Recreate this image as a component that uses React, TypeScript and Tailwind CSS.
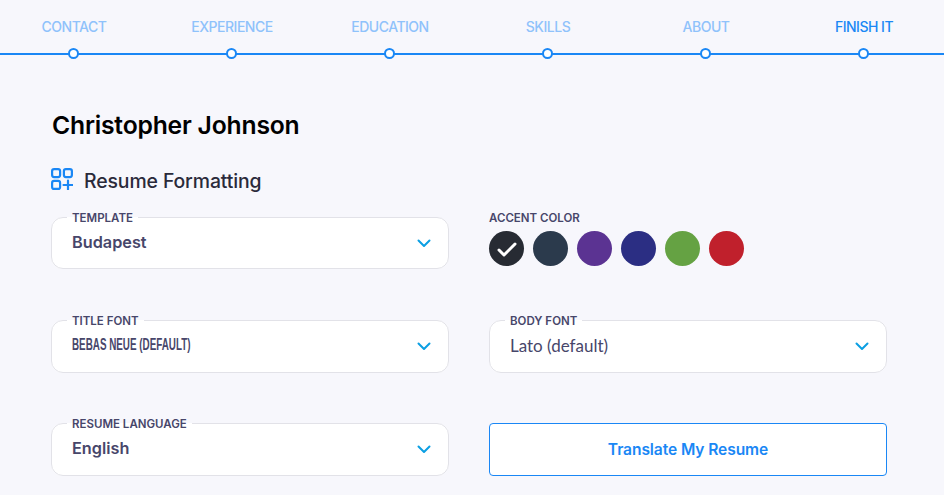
const steps = ["CONTACT", "EXPERIENCE", "EDUCATION", "SKILLS", "ABOUT", "FINISH IT"];
const colors = ["bg-[#272b33]", "bg-[#2b3a4c]", "bg-[#5b3392]", "bg-[#2b2e83]", "bg-[#65a243]", "bg-[#c0202c]"];

function Chevron() {
  return (
    <svg width="14" height="9" viewBox="0 0 14 9" fill="none" className="shrink-0">
      <path d="M1.5 1.5L7 7l5.5-5.5" stroke="#0b9fe3" strokeWidth="2" strokeLinecap="round" strokeLinejoin="round" />
    </svg>
  );
}

function Field({ label, children, height }: { label: string; children: React.ReactNode; height: string }) {
  return (
    <fieldset className={`${height} rounded-xl border border-[#e2e2e8] bg-white pl-[20px] pr-[17px]`}>
      <legend className="ml-[-5px] px-[5px] text-[11.5px] leading-[12px] font-semibold text-[#47466a]">
        <span className="relative top-[1px]">{label}</span>
      </legend>
      <div className="flex h-[40px] items-center justify-between">
        {children}
        <Chevron />
      </div>
    </fieldset>
  );
}

export default function App() {
  return (
    <div className="h-[495px] w-[944px] overflow-hidden bg-[#f7f7fc] font-['Inter',sans-serif]">
      <div className="h-[55px] border-b-2 border-[#1a87f5]">
        <div className="ml-[-6px] grid w-[948px] grid-cols-6">
          {steps.map((s, i) => (
            <div key={s} className="flex h-[60px] flex-col items-center pt-[19px]">
              <span className={`pl-[2px] text-[14px] leading-[16px] font-medium tracking-[-0.5px] ${i === 5 ? "text-[#1a87f5]" : "text-[#8fc2fb]"}`}>{s}</span>
              <span className="mt-[13px] h-[11px] w-[11px] rounded-full border-2 border-[#1a87f5] bg-white" />
            </div>
          ))}
        </div>
      </div>

      <div className="pl-[51px] pr-[57px]">
        <h1 className="mt-[55px] ml-[1px] text-[24.7px] leading-[30px] font-semibold tracking-[-0.2px] text-black">Christopher Johnson</h1>
        <div className="mt-[27px] flex h-[24px] items-center gap-[11px]">
          <svg width="22" height="22" viewBox="0 0 22 22" fill="none" stroke="#1a87f5" strokeWidth="2.2">
            <rect x="1.1" y="1.1" width="8" height="8" rx="2" />
            <rect x="12.9" y="1.1" width="8" height="8" rx="2" />
            <rect x="1.1" y="12.9" width="8" height="8" rx="2" />
            <path d="M17 12.5v9M12.5 17h9" strokeLinecap="round" />
          </svg>
          <h2 className="pt-[3px] text-[19.4px] leading-[24px] font-medium tracking-[-0.1px] text-[#2a2a3a]">Resume Formatting</h2>
        </div>

        <div className="mt-[20px] grid grid-cols-2 gap-x-[40px] gap-y-[44px]">
          <Field label="TEMPLATE" height="h-[58px] mb-[1px]">
            <span className="pb-[2px] text-[16.25px] font-semibold text-[#47466a]">Budapest</span>
          </Field>
          <div>
            <div className="pt-[1px] text-[11.5px] leading-[12px] font-semibold text-[#47466a]">ACCENT COLOR</div>
            <div className="mt-[7px] flex gap-[9px]">
              {colors.map((c, i) => (
                <div key={c} className={`flex h-[35px] w-[35px] items-center justify-center rounded-full ${c}`}>
                  {i === 0 && (
                    <svg width="20" height="16" viewBox="0 0 20 16" fill="none">
                      <path d="M2 9l5 5L18 3" stroke="white" strokeWidth="3" strokeLinecap="round" strokeLinejoin="round" />
                    </svg>
                  )}
                </div>
              ))}
            </div>
          </div>

          <Field label="TITLE FONT" height="h-[59px]">
            <span className="inline-block w-[118px] origin-left scale-x-[0.615] whitespace-nowrap pb-[2px] font-['Liberation_Sans',sans-serif] text-[16px] font-bold text-[#47466a]">BEBAS NEUE (DEFAULT)</span>
          </Field>
          <Field label="BODY FONT" height="h-[59px]">
            <span className="font-['Lato',sans-serif] text-[17px] text-[#47466a]">Lato (default)</span>
          </Field>

          <Field label="RESUME LANGUAGE" height="h-[59px]">
            <span className="pb-[2px] text-[16.25px] font-semibold text-[#47466a]">English</span>
          </Field>
          <div className="pt-[6px]">
            <button className="h-[53px] w-full rounded-[4px] border border-[#1a87f5] bg-white text-[15.6px] font-semibold tracking-[-0.1px] text-[#1a87f5]">
              Translate My Resume
            </button>
          </div>
        </div>
      </div>
    </div>
  );
}
